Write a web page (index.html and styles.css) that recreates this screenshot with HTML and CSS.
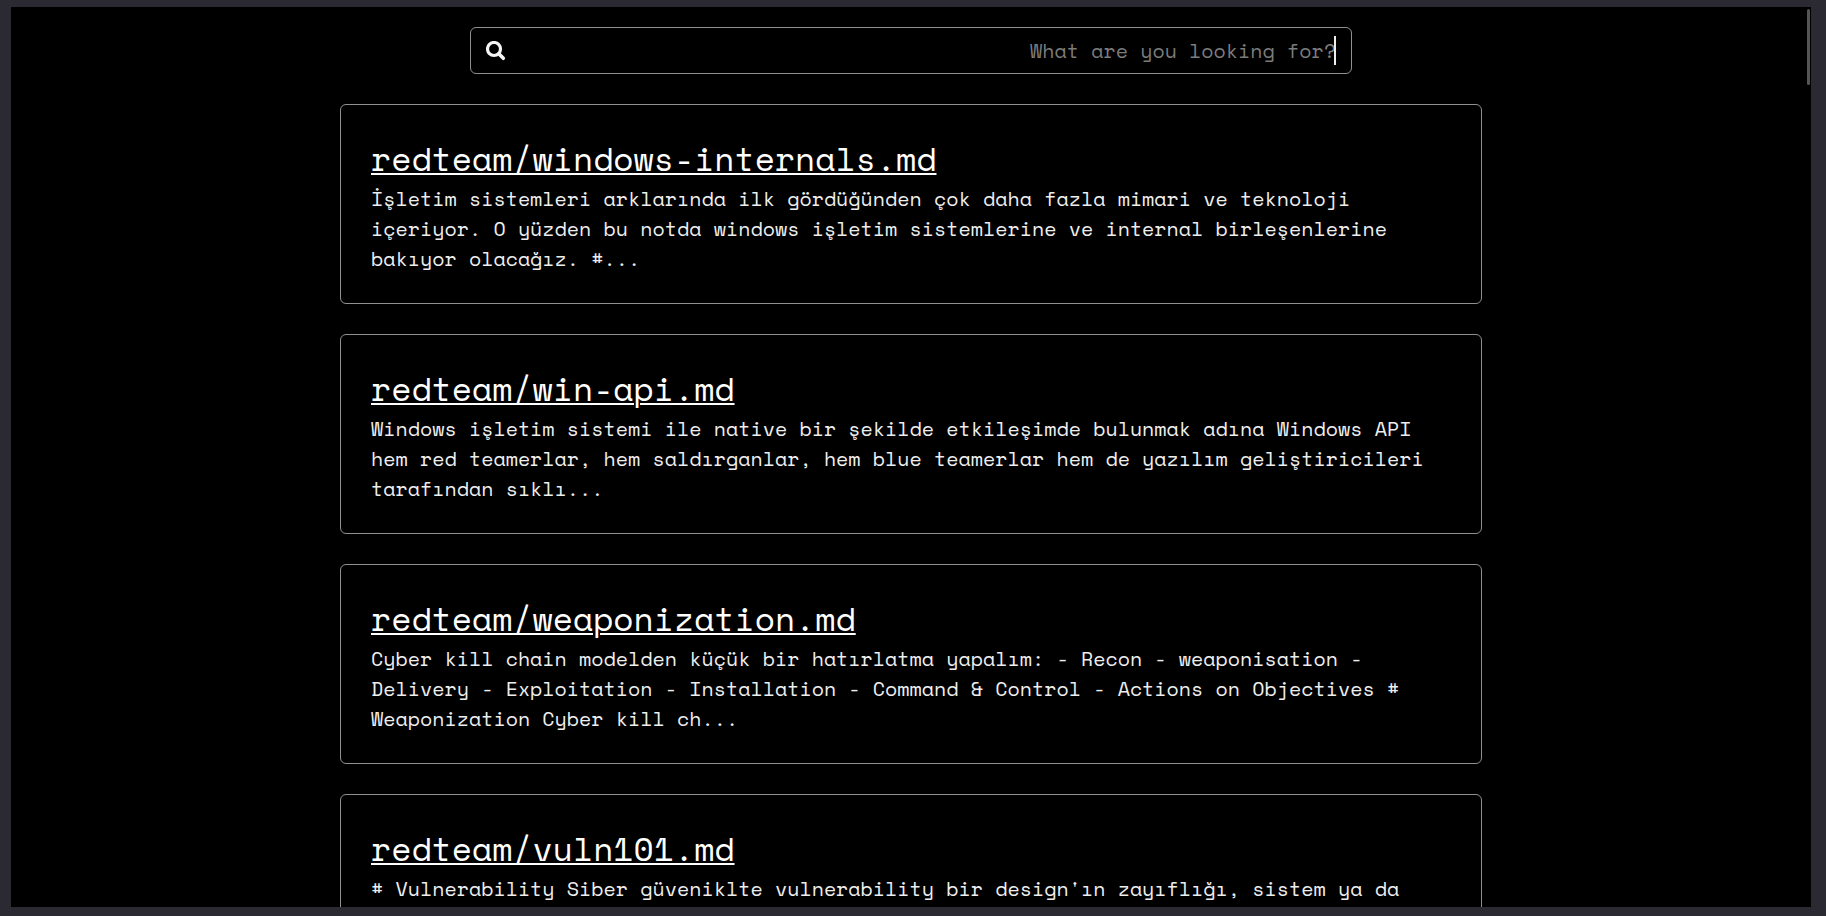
FILE: index.html
```html
<!DOCTYPE html>
<html lang="tr">
<head>
<meta charset="utf-8">
<title>Notes</title>
<link rel="stylesheet" href="styles.css">
</head>
<body>
<div class="page">
  <form class="search" role="search">
    <svg class="search-icon" viewBox="0 0 20 20" aria-hidden="true">
      <circle cx="8" cy="8" r="6.5" fill="none" stroke="currentColor" stroke-width="3.2"/>
      <path d="M12.8 12.8L17.3 17.3" stroke="currentColor" stroke-width="3.6" stroke-linecap="round"/>
    </svg>
    <input class="search-input" type="text" aria-label="Search notes" placeholder="What are you looking for?">
    <span class="caret"></span>
  </form>
  <main class="results">
    <article class="card">
      <h2 class="card-title"><a href="#windows-internals">redteam/windows-internals.md</a></h2>
      <p class="card-text">İşletim sistemleri arklarında ilk gördüğünden çok daha fazla mimari ve teknoloji içeriyor. O yüzden bu notda windows işletim sistemlerine ve internal birleşenlerine bakıyor olacağız. #...</p>
    </article>
    <article class="card">
      <h2 class="card-title"><a href="#win-api">redteam/win-api.md</a></h2>
      <p class="card-text">Windows işletim sistemi ile native bir şekilde etkileşimde bulunmak adına Windows API hem red teamerlar, hem saldırganlar, hem blue teamerlar hem de yazılım geliştiricileri tarafından sıklı...</p>
    </article>
    <article class="card">
      <h2 class="card-title"><a href="#weaponization">redteam/weaponization.md</a></h2>
      <p class="card-text">Cyber kill chain modelden küçük bir hatırlatma yapalım: - Recon - weaponisation - Delivery - Exploitation - Installation - Command &amp; Control - Actions on Objectives # Weaponization Cyber kill ch...</p>
    </article>
    <article class="card">
      <h2 class="card-title"><a href="#vuln101">redteam/vuln101.md</a></h2>
      <p class="card-text"># Vulnerability Siber güveniklte vulnerability bir design'ın zayıflığı, sistem ya da</p>
    </article>
  </main>
  <div class="scroll-thumb"></div>
</div>
</body>
</html>
```

FILE: styles.css
```css
* {
  box-sizing: border-box;
}

body {
  display: flex;
  height: 100vh;
  margin: 0;
  padding: 7px 15px 9px 11px;
  background: #2b2a33;
  color: #eee;
  font: 20px/30px "Space Mono", "Liberation Mono", monospace;
}

.page {
  position: relative;
  flex: 1;
  overflow: hidden;
  padding-top: 20px;
  background: #000;
}

.search {
  position: relative;
  display: flex;
  align-items: center;
  max-width: 882px;
  margin: 0 auto 30px;
  padding: 8px 15px;
  border: 1px solid #909090;
  border-radius: 6px;
}

.search-icon {
  flex: none;
  width: 20px;
  height: 20px;
  color: #f5f5f5;
}

.search-input {
  flex: 1;
  min-width: 0;
  height: 29px;
  padding: 0;
  border: 0;
  outline: 0;
  background: transparent;
  color: #eee;
  font: inherit;
  text-align: right;
}

.search-input::placeholder {
  color: #7c7c7c;
  opacity: 1;
}

.caret {
  position: absolute;
  top: 8px;
  right: 15px;
  width: 2px;
  height: 29px;
  background: #eee;
}

.results {
  display: flex;
  flex-direction: column;
  gap: 30px;
  max-width: 1142px;
  margin: 0 auto;
}

.card {
  padding: 29px 30px;
  border: 1px solid #909090;
  border-radius: 6px;
}

.card-title {
  margin: 0;
  font-size: 33px;
  font-weight: 400;
  line-height: 50px;
}

.card-title a {
  color: #fff;
  text-decoration: underline;
  text-decoration-thickness: 2px;
  text-underline-offset: 2px;
}

.card-text {
  margin: 0;
}

.scroll-thumb {
  position: absolute;
  top: 2px;
  right: 1px;
  width: 3px;
  height: 76px;
  border-radius: 2px;
  background: #555;
}
```
